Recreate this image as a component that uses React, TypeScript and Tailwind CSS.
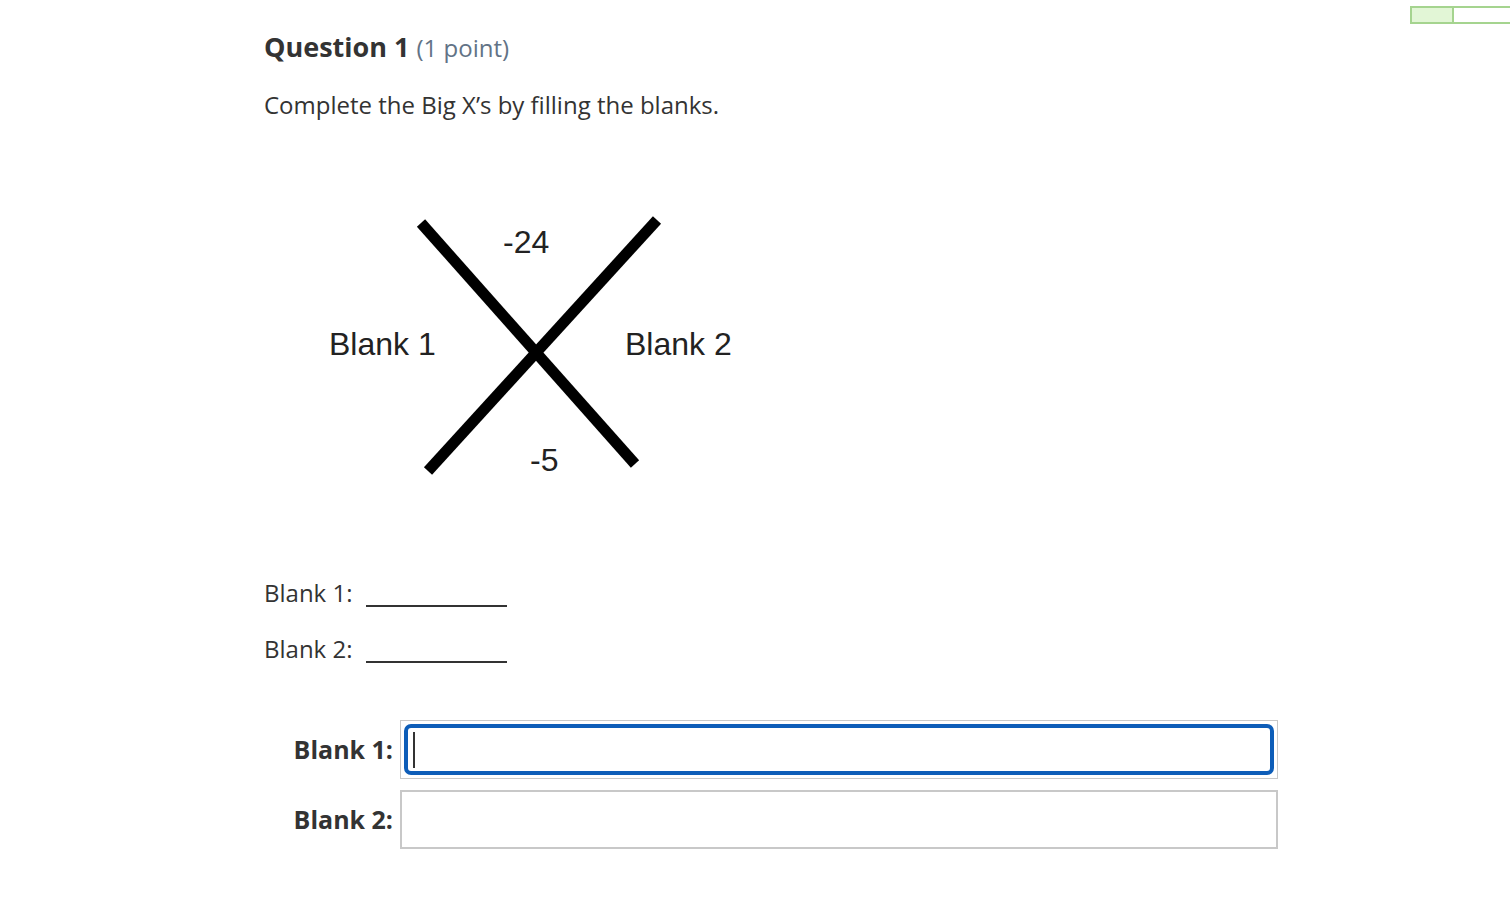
import React from 'react'

function BigX() {
  return (
    <svg width="450" height="290" viewBox="0 0 450 290" className="block">
      <line x1="111" y1="22" x2="325" y2="263" stroke="#000" strokeWidth="11" />
      <line x1="347" y1="19" x2="118" y2="270" stroke="#000" strokeWidth="11" />
      <g fill="#222" fontFamily="'Liberation Sans', Arial, sans-serif" fontSize="32">
        <text x="193" y="52">-24</text>
        <text x="220" y="270">-5</text>
        <text x="19" y="154">Blank 1</text>
        <text x="315" y="154">Blank 2</text>
      </g>
    </svg>
  )
}

function AnswerField({ label, focused }: { label: string; focused?: boolean }) {
  return (
    <div className="flex items-center">
      <label className="w-[137px] pr-[7px] text-right text-[25px] font-bold text-[#333]">{label}</label>
      {focused ? (
        <div className="w-[878px] h-[59px] border border-[#c8c8c8] p-[3px]">
          <div className="h-full rounded-[7px] border-[4px] border-[#0d5db8] flex items-center pl-[5px]">
            <span className="block w-[2px] h-[36px] bg-[#333]"></span>
          </div>
        </div>
      ) : (
        <div className="w-[878px] h-[59px] border-2 border-[#c8c8c8]"></div>
      )}
    </div>
  )
}

export default function App() {
  return (
    <div className="relative min-h-[914px] bg-white font-['Open_Sans',sans-serif] text-[#333]">
      {/* progress widget */}
      <div className="absolute top-[6px] left-[1410px] right-0 h-[18px] border-2 border-r-0 border-[#a5d48f] flex">
        <div className="w-[42px] h-full bg-[#e2f6d6] border-r-2 border-[#a5d48f]"></div>
      </div>

      <div className="pl-[264px] pt-[27px]">
        <h2 className="text-[27px] leading-[40px] font-bold text-[#333]">
          Question 1 <span className="text-[24px] font-normal text-[#627386]">(1 point)</span>
        </h2>
        <p className="mt-[21px] text-[24px] leading-[32px]">Complete the Big X’s by filling the blanks.</p>

        <div className="mt-[80px] ml-[46px]">
          <BigX />
        </div>

        <div className="mt-[86px] flex flex-col gap-[24px] text-[24px]">
          <div className="flex items-end">
            <span className="w-[102px] leading-[32px]">Blank 1:</span>
            <span className="block w-[141px] h-[2px] bg-[#333] mb-[2px]"></span>
          </div>
          <div className="flex items-end">
            <span className="w-[102px] leading-[32px]">Blank 2:</span>
            <span className="block w-[141px] h-[2px] bg-[#333] mb-[2px]"></span>
          </div>
        </div>

        <div className="mt-[55px] ml-[-1px] flex flex-col gap-[11px]">
          <AnswerField label="Blank 1:" focused />
          <AnswerField label="Blank 2:" />
        </div>
      </div>
    </div>
  )
}
